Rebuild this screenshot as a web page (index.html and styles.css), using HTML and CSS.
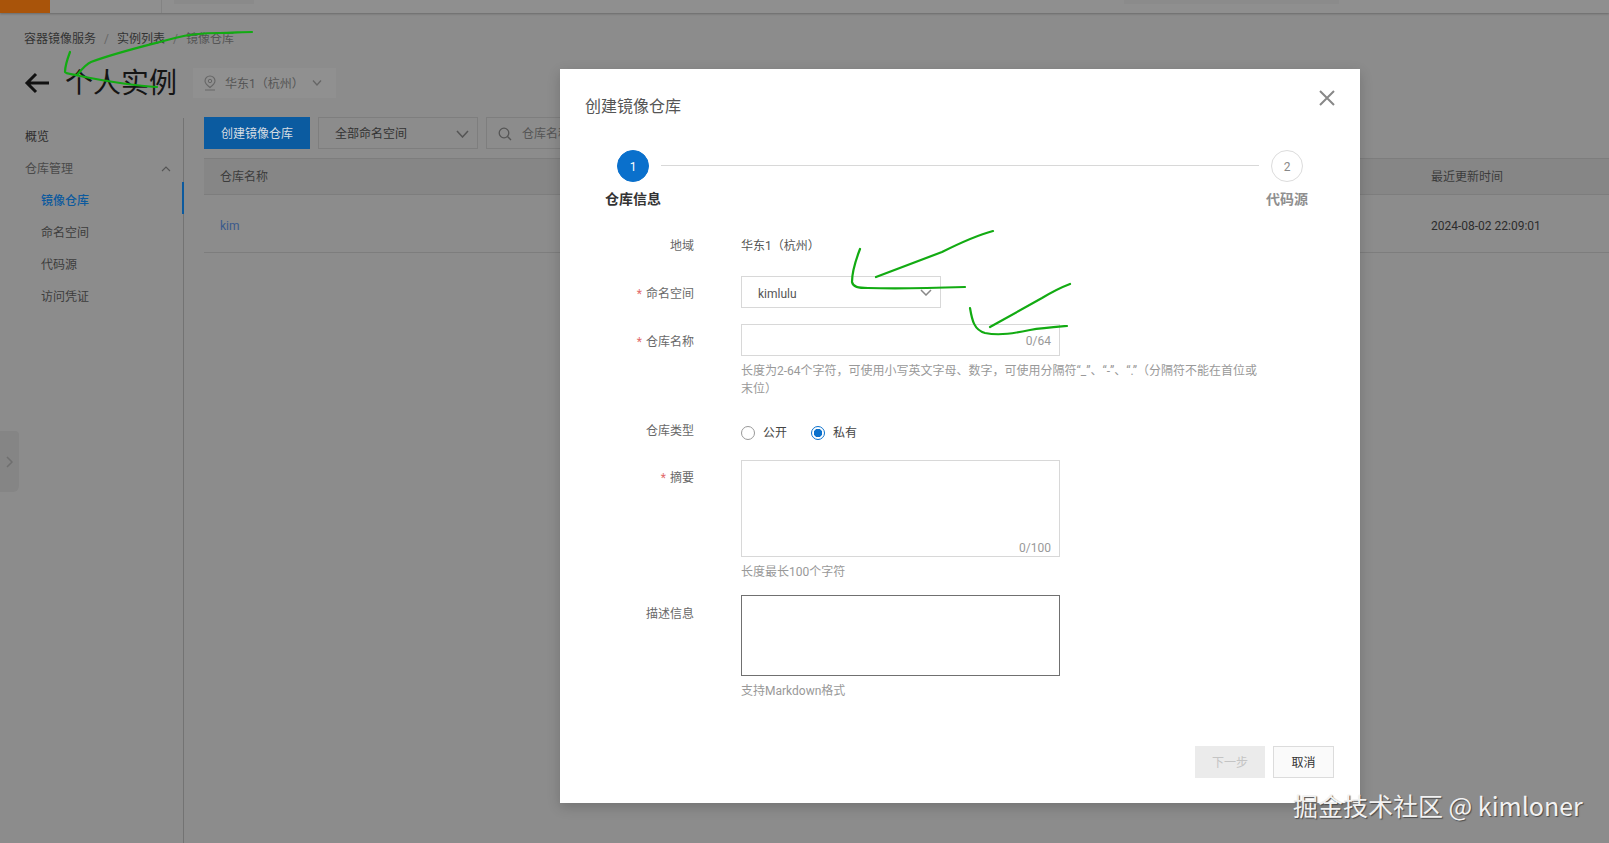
FILE: index.html
```html
<!DOCTYPE html>
<html lang="zh-CN">
<head>
<meta charset="utf-8">
<title>创建镜像仓库</title>
<link rel="stylesheet" href="styles.css">
</head>
<body>
<header class="topbar">
  <div class="brand"></div>
  <div class="top-sep"></div>
  <div class="top-pill"></div>
  <div class="top-pill top-pill-right"></div>
</header>
<main class="page">
  <nav class="crumbs"><span>容器镜像服务</span><i>/</i><span>实例列表</span><i>/</i><span>镜像仓库</span></nav>
  <div class="title-row">
    <svg class="back" width="26" height="24" viewBox="0 0 26 24"><path d="M25 12H3M12 3l-9 9 9 9" fill="none" stroke="#111" stroke-width="3"/></svg>
    <h1>个人实例</h1>
    <div class="region">
      <svg width="14" height="16" viewBox="0 0 14 16"><path d="M7 1a5 5 0 0 1 5 5c0 2.500-3 5-5 6.500C5 11 2 8.500 2 6a5 5 0 0 1 5-5zM2 15h10" fill="none" stroke="#666" stroke-width="1.100"/><circle cx="7" cy="6" r="1.700" fill="none" stroke="#666"/></svg>
      <span class="region-text">华东1（杭州）</span>
      <svg width="10" height="8" viewBox="0 0 10 8"><path d="M1 1.500l4 4.500 4-4.500" fill="none" stroke="#666" stroke-width="1.300"/></svg>
    </div>
  </div>
  <div class="body">
    <aside class="side">
      <a class="side-item side-strong">概览</a>
      <a class="side-item side-group">仓库管理<svg width="10" height="6" viewBox="0 0 10 6"><path d="M1 5l4-4 4 4" fill="none" stroke="#555" stroke-width="1.100"/></svg></a>
      <a class="side-item side-sub side-active">镜像仓库</a>
      <a class="side-item side-sub">命名空间</a>
      <a class="side-item side-sub">代码源</a>
      <a class="side-item side-sub">访问凭证</a>
    </aside>
    <section class="content">
      <div class="toolbar">
        <button class="primary">创建镜像仓库</button>
        <div class="filter"><span>全部命名空间</span><svg width="13" height="8" viewBox="0 0 13 8"><path d="M1 1l5.500 6L12 1" fill="none" stroke="#555" stroke-width="1.500"/></svg></div>
        <div class="search"><svg width="14" height="14" viewBox="0 0 14 14"><circle cx="6" cy="6" r="4.800" fill="none" stroke="#555" stroke-width="1.300"/><path d="M9.500 9.500L13 13" stroke="#555" stroke-width="1.300"/></svg><span>仓库名称</span></div>
      </div>
      <div class="table">
        <div class="thead"><span>仓库名称</span><span class="col-time">最近更新时间</span></div>
        <div class="trow"><a>kim</a><span class="col-time">2024-08-02 22:09:01</span></div>
      </div>
    </section>
  </div>
</main>
<div class="edge-tab"><svg width="7" height="12" viewBox="0 0 7 12"><path d="M1 1l5 5-5 5" fill="none" stroke="#6f6f6f" stroke-width="1.500"/></svg></div>

<div class="modal">
  <h2>创建镜像仓库</h2>
  <svg class="close" width="16" height="16" viewBox="0 0 16 16"><path d="M1 1l14 14M15 1L1 15" stroke="#888" stroke-width="2"/></svg>
  <div class="steps">
    <div class="step step-on"><b>1</b><span>仓库信息</span></div>
    <div class="step-line"></div>
    <div class="step"><b>2</b><span>代码源</span></div>
  </div>
  <div class="row">
    <label>地域</label>
    <div class="val">华东1（杭州）</div>
  </div>
  <div class="row">
    <label><em>*</em>命名空间</label>
    <div class="box box-select"><span class="sel-text">kimlulu</span><svg width="12" height="7" viewBox="0 0 12 7"><path d="M1 1l5 5 5-5" fill="none" stroke="#888" stroke-width="1.500"/></svg></div>
  </div>
  <div class="row">
    <label><em>*</em>仓库名称</label>
    <div>
      <div class="box box-wide box-count"><span>0/64</span></div>
      <p class="hint hint-wrap">长度为2-64个字符，可使用小写英文字母、数字，可使用分隔符“_”、“-”、“.”（分隔符不能在首位或末位）</p>
    </div>
  </div>
  <div class="row row-tight">
    <label>仓库类型</label>
    <div class="radios">
      <span class="radio"><i></i>公开</span>
      <span class="radio radio-on"><i></i>私有</span>
    </div>
  </div>
  <div class="row row-tight">
    <label><em>*</em>摘要</label>
    <div>
      <div class="box box-wide box-area"><span>0/100</span></div>
      <p class="hint">长度最长100个字符</p>
    </div>
  </div>
  <div class="row row-tight">
    <label class="label-desc">描述信息</label>
    <div>
      <div class="box box-wide box-desc"></div>
      <p class="hint">支持Markdown格式</p>
    </div>
  </div>
  <div class="foot">
    <button class="btn btn-off">下一步</button>
    <button class="btn">取消</button>
  </div>
</div>

<svg class="ink" width="1609" height="843" viewBox="0 0 1609 843">
  <g fill="none" stroke="#12ab12" stroke-width="2.200" stroke-linecap="round" stroke-linejoin="round">
    <path d="M70 52C67 60 65 66 65 72C66 74 72 74 80 76C105 81 135 86 157 87"/>
    <path d="M77 75C82 69 86 64 91 62C118 52 145 46 175 38C190 34 205 33 220 33C232 33 242 32 252 32"/>
    <path d="M860 249C855 262 852 272 852 282C853 287 858 288 868 288C900 289 935 288 965 287"/>
    <path d="M876 277L942 252C958 244 978 235 993 231"/>
    <path d="M970 308C972 320 974 330 985 333C1000 336 1015 333 1030 330C1042 328 1055 327 1067 326"/>
    <path d="M990 327L1042 298C1052 292 1062 287 1070 284"/>
  </g>
</svg>
<div class="mark">掘金技术社区 @ kimloner</div>
</body>
</html>
```
FILE: styles.css
```css
* { box-sizing: border-box; }
html, body { margin: 0; height: 843px; overflow: hidden; }
body {
  position: relative;
  background: #8c8c8c;
  color: #2c2c2c;
  font: 12px/18px Roboto, "Noto Sans CJK SC", sans-serif;
  text-spacing-trim: space-all;
}
h1, h2, p { margin: 0; font-weight: 400; }
button { font: inherit; border: 0; padding: 0; }

.topbar {
  display: flex;
  height: 13px;
  background: #8f8f8f;
  box-shadow: 0 1px 2px rgba(0, 0, 0, .25);
}
.brand { width: 50px; background: #a9540a; }
.top-sep { width: 1px; margin-left: 111px; background: #838383; }
.top-pill { width: 80px; height: 4px; margin-left: 12px; background: #8a8a8a; }
.top-pill-right { width: 215px; margin-left: 870px; background: #8b8b8b; }

.page { padding-top: 17px; }
.crumbs { display: flex; height: 18px; padding-left: 24px; color: #333; }
.crumbs i { margin: 0 8px; font-style: normal; color: #666; }
.crumbs span:last-child { color: #555; }

.title-row { display: flex; align-items: center; height: 36px; margin-top: 17px; padding-left: 24px; }
.back { flex: none; }
h1 { margin-left: 15px; padding-top: 2px; font-size: 28px; line-height: 36px; color: #151515; }
.region {
  display: flex;
  align-items: center;
  gap: 8px;
  width: 143px;
  height: 30px;
  margin-left: 16px;
  padding-left: 10px;
  background: #909090;
  color: #555;
}
.region-text { padding-top: 2px; }

.body { display: flex; height: 725px; margin-top: 17px; }
.side { width: 184px; padding-top: 2px; border-right: 1px solid #737373; }
.side-item { position: relative; display: flex; align-items: center; height: 32px; padding: 1px 0 0 25px; color: #444; }
.side-strong { color: #2c2c2c; }
.side-group { justify-content: space-between; padding-right: 12px; color: #4a4a4a; }
.side-sub { padding-left: 41px; color: #3c3c3c; }
.side-active { color: #0c5a9e; font-weight: 500; }
.side-active::after {
  content: "";
  position: absolute;
  top: -2px;
  right: -1px;
  width: 2px;
  height: 32px;
  background: #0c5a9e;
}

.content { flex: 1; padding-left: 20px; margin-top: -1px; }
.toolbar { display: flex; gap: 8px; height: 32px; }
.primary { width: 106px; padding-top: 2px; background: #0b5ba0; color: #d6dde3; }
.filter, .search { display: flex; align-items: center; padding-top: 2px; border: 1px solid #7e7e7e; color: #333; }
.filter { justify-content: space-between; width: 160px; padding-left: 16px; padding-right: 8px; }
.search { gap: 10px; width: 300px; padding-left: 11px; color: #555; }

.table { margin-top: 9px; }
.thead, .trow { display: flex; justify-content: space-between; padding-left: 16px; border-bottom: 1px solid #7d7d7d; }
.thead { align-items: center; height: 37px; padding-top: 1px; background: #868686; border-top: 1px solid #7d7d7d; color: #3c3c3c; }
.trow { align-items: center; height: 58px; padding-top: 5px; }
.trow a { color: #3a5a8c; }
.col-time { width: 178px; }

.edge-tab {
  position: absolute;
  left: 0;
  top: 431px;
  display: flex;
  align-items: center;
  justify-content: flex-end;
  width: 19px;
  height: 61px;
  padding-right: 6px;
  background: #858585;
  border-radius: 0 4px 6px 0;
}

.modal {
  position: absolute;
  left: 560px;
  top: 69px;
  width: 800px;
  height: 734px;
  padding: 26px 26px 0 25px;
  background: #fff;
  color: #555;
  box-shadow: 0 4px 12px rgba(0, 0, 0, .18);
}
h2 { font-size: 16px; line-height: 24px; color: #555; }
.close { position: absolute; top: 21px; right: 25px; }

.steps { display: flex; margin: 31px 19px 18px 20px; }
.step { display: flex; flex-direction: column; align-items: center; width: 56px; }
.step b {
  display: flex;
  align-items: center;
  justify-content: center;
  width: 32px;
  height: 32px;
  padding-top: 1px;
  border: 1px solid #dcdcdc;
  border-radius: 50%;
  background: #fff;
  color: #888;
  font-weight: 400;
}
.step span { margin-top: 6px; font-size: 14px; line-height: 22px; font-weight: 700; color: #8f8f8f; white-space: nowrap; }
.step-on b { background: #0a70cc; border-color: #0a70cc; color: #fff; }
.step-on span { color: #333; }
.step-line { flex: 1; height: 1px; margin-top: 15px; background: #d8d8d8; }

.row { display: grid; grid-template-columns: 109px 1fr; column-gap: 47px; margin-bottom: 16px; }
.row-tight { margin-bottom: 15px; }
.row label { height: 32px; padding-top: 2px; line-height: 32px; text-align: right; color: #686868; }
.row label em { margin-right: 4px; font-style: normal; color: #e26a6a; }
.row .label-desc { line-height: 34px; }
.val { height: 32px; padding-top: 2px; line-height: 32px; color: #555; }

.box { position: relative; height: 32px; border: 1px solid #d8d8d8; background: #fff; }
.box-select {
  display: flex;
  align-items: center;
  justify-content: space-between;
  width: 200px;
  padding: 0 8px 0 16px;
  color: #555;
}
.sel-text { padding-top: 3px; }
.box-wide { width: 319px; }
.box-count span { position: absolute; right: 8px; bottom: 5px; color: #999; }
.box-area span { position: absolute; right: 8px; bottom: -1px; color: #999; }
.box-area { height: 97px; }
.box-desc { height: 81px; border: 1.500px solid #707070; }

.hint { margin-top: 6px; margin-bottom: -1px; color: #999; }
.hint-wrap { width: 525px; }

.radios { display: flex; gap: 24px; height: 32px; padding-top: 11px; }
.radio { display: flex; align-items: center; gap: 8px; height: 18px; line-height: 20px; color: #444; }
.radio i { width: 14px; height: 14px; border: 1px solid #999; border-radius: 50%; background: #fff; }
.radio-on i { border: 1px solid #0a70cc; background: radial-gradient(circle, #0a70cc 0 4px, #fff 4.500px); }

.foot { display: flex; justify-content: flex-end; gap: 8px; margin-top: 47px; }
.btn { width: 61px; height: 32px; padding-top: 2px; border: 1px solid #dcdcdc; background: #fafafa; color: #333; }
.btn-off { width: 70px; border-color: #ebebeb; background: #ebebeb; color: #c4c4c4; }

.ink { position: absolute; left: 0; top: 0; pointer-events: none; }
.mark {
  position: absolute;
  left: 1293px;
  top: 788px;
  font-family: "Noto Sans CJK SC", sans-serif;
  font-size: 25px;
  line-height: 34px;
  color: #f2f2f2;
  text-shadow: 1px 1px 1px #4a4a4a;
  white-space: nowrap;
}
```
